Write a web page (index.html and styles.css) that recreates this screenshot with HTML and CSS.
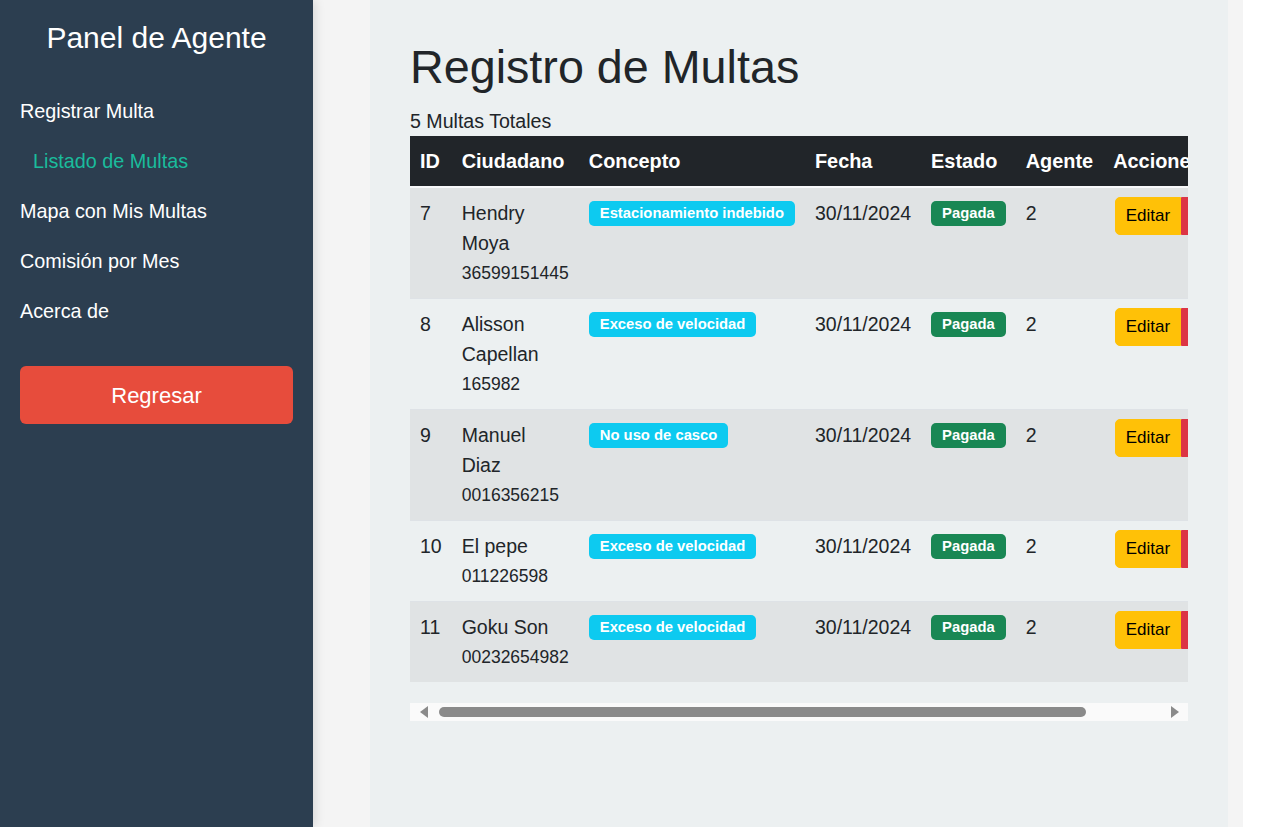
FILE: index.html
```html
<!DOCTYPE html>
<html lang="es">
<head>
<meta charset="utf-8">
<title>Registro de Multas</title>
<link rel="stylesheet" href="styles.css">
</head>
<body>
<div class="layout">
  <aside class="sidebar">
    <h2 class="sidebar-title">Panel de Agente</h2>
    <ul class="nav">
      <li><a href="#" class="nav-link">Registrar Multa</a></li>
      <li><a href="#" class="nav-link active">Listado de Multas</a></li>
      <li><a href="#" class="nav-link">Mapa con Mis Multas</a></li>
      <li><a href="#" class="nav-link">Comisión por Mes</a></li>
      <li><a href="#" class="nav-link">Acerca de</a></li>
    </ul>
    <button class="btn-back">Regresar</button>
  </aside>
  <main class="main">
    <div class="content">
      <h1 class="page-title">Registro de Multas</h1>
      <p class="total">5 Multas Totales</p>
      <div class="table-wrap">
        <table class="table">
          <thead>
            <tr>
              <th>ID</th>
              <th>Ciudadano</th>
              <th>Concepto</th>
              <th>Fecha</th>
              <th>Estado</th>
              <th>Agente</th>
              <th>Acciones</th>
            </tr>
          </thead>
          <tbody>
            <tr>
              <td>7</td>
              <td><div class="cit-name">Hendry Moya</div><div class="cit-doc">36599151445</div></td>
              <td><span class="badge badge-info">Estacionamiento indebido</span></td>
              <td>30/11/2024</td>
              <td><span class="badge badge-success">Pagada</span></td>
              <td>2</td>
              <td><div class="btn-group"><button class="btn btn-warning">Editar</button><button class="btn btn-danger">Eliminar</button></div></td>
            </tr>
            <tr>
              <td>8</td>
              <td><div class="cit-name">Alisson Capellan</div><div class="cit-doc">165982</div></td>
              <td><span class="badge badge-info">Exceso de velocidad</span></td>
              <td>30/11/2024</td>
              <td><span class="badge badge-success">Pagada</span></td>
              <td>2</td>
              <td><div class="btn-group"><button class="btn btn-warning">Editar</button><button class="btn btn-danger">Eliminar</button></div></td>
            </tr>
            <tr>
              <td>9</td>
              <td><div class="cit-name">Manuel Diaz</div><div class="cit-doc">0016356215</div></td>
              <td><span class="badge badge-info">No uso de casco</span></td>
              <td>30/11/2024</td>
              <td><span class="badge badge-success">Pagada</span></td>
              <td>2</td>
              <td><div class="btn-group"><button class="btn btn-warning">Editar</button><button class="btn btn-danger">Eliminar</button></div></td>
            </tr>
            <tr>
              <td>10</td>
              <td><div class="cit-name">El pepe</div><div class="cit-doc">011226598</div></td>
              <td><span class="badge badge-info">Exceso de velocidad</span></td>
              <td>30/11/2024</td>
              <td><span class="badge badge-success">Pagada</span></td>
              <td>2</td>
              <td><div class="btn-group"><button class="btn btn-warning">Editar</button><button class="btn btn-danger">Eliminar</button></div></td>
            </tr>
            <tr>
              <td>11</td>
              <td><div class="cit-name">Goku Son</div><div class="cit-doc">00232654982</div></td>
              <td><span class="badge badge-info">Exceso de velocidad</span></td>
              <td>30/11/2024</td>
              <td><span class="badge badge-success">Pagada</span></td>
              <td>2</td>
              <td><div class="btn-group"><button class="btn btn-warning">Editar</button><button class="btn btn-danger">Eliminar</button></div></td>
            </tr>
          </tbody>
        </table>
      </div>
      <div class="hscroll" aria-hidden="true">
        <span class="hscroll-arrow hscroll-left"></span>
        <div class="hscroll-track"><div class="hscroll-thumb" style="width: 88.9%"></div></div>
        <span class="hscroll-arrow hscroll-right"></span>
      </div>
    </div>
  </main>
</div>
</body>
</html>
```
FILE: styles.css
```css
* { box-sizing: border-box; }

html, body {
  margin: 0;
  padding: 0;
  background: #ffffff;
  font-family: "Liberation Sans", Arial, sans-serif;
  color: #212529;
}

.layout {
  display: flex;
  min-height: 100vh;
}

/* Sidebar */
.sidebar {
  flex: none;
  width: 313px;
  min-height: 100vh;
  background: #2c3e50;
  padding: 20px;
  position: relative;
  z-index: 2;
  box-shadow: 2px 0 10px rgba(0, 0, 0, 0.12);
}

.sidebar-title {
  margin: 0;
  font-size: 30px;
  line-height: 36px;
  font-weight: 400;
  color: #ffffff;
  text-align: center;
}

.nav {
  list-style: none;
  margin: 30px 0 0;
  padding: 0;
}

.nav-link {
  display: block;
  padding: 10px 0;
  font-size: 19.8px;
  line-height: 30px;
  color: #ffffff;
  text-decoration: none;
}

.nav-link.active {
  color: #1abc9c;
  padding-left: 13px;
}

.btn-back {
  display: block;
  width: 100%;
  margin-top: 30px;
  padding: 15px 10px 15px;
  border: 0;
  border-radius: 6px;
  background: #e74c3c;
  color: #ffffff;
  font-family: inherit;
  font-size: 22px;
  line-height: 30px;
  height: 58px;
}

/* Main */
.main {
  flex: none;
  width: 930px;
  background: #f4f4f4;
  padding: 0 15px 0 57px;
}

.content {
  background: #ecf0f1;
  min-height: 100vh;
  padding: 39px 40px;
}

.page-title {
  margin: 0 0 11px;
  font-size: 46.7px;
  line-height: 56px;
  font-weight: 400;
}

.total {
  margin: 0;
  font-size: 19.6px;
  line-height: 30px;
}

/* Table */
.table-wrap {
  overflow-x: hidden;
}

.table {
  width: 100%;
  border-collapse: collapse;
  margin-bottom: 21px;
  vertical-align: top;
}

.table th {
  background: #212529;
  color: #ffffff;
  font-weight: 700;
  font-size: 19.9px;
  line-height: 30px;
  text-align: left;
  padding: 10px;
  white-space: nowrap;
  border-bottom: 2px solid #f8f9fa;
}

.table td {
  padding: 10px;
  font-size: 19.5px;
  line-height: 30px;
  vertical-align: top;
  border-bottom: 1px solid #dee2e6;
}

.table tbody tr:nth-child(odd) td {
  background: rgba(0, 0, 0, 0.05);
}

.table tbody tr:last-child td {
  border-bottom: 0;
}

.cit-name {
  line-height: 30px;
}

.cit-doc {
  font-size: 17.5px;
  line-height: 30px;
}

.badge {
  display: inline-block;
  padding: 5px 11px;
  font-size: 14.8px;
  line-height: 1;
  font-weight: 700;
  color: #ffffff;
  border-radius: 5px;
  white-space: nowrap;
  vertical-align: 2px;
}

.badge-info { background: #0dcaf0; }
.badge-success { background: #198754; }

.btn-group {
  display: flex;
  margin-top: -1px;
  padding-left: 2px;
}

.btn {
  font-family: inherit;
  font-size: 17px;
  line-height: 24px;
  padding: 6px 9.5px;
  border: 1px solid transparent;
  white-space: nowrap;
}

.btn-warning {
  background: #ffc107;
  border-color: #ffc107;
  color: #000000;
  border-radius: 5px 0 0 5px;
}

.btn-danger {
  background: #dc3545;
  border-color: #dc3545;
  color: #ffffff;
  border-radius: 0 5px 5px 0;
}

/* Horizontal scrollbar of the table */
.hscroll {
  display: flex;
  align-items: center;
  height: 18px;
  background: #fafafa;
}

.hscroll-arrow {
  flex: none;
  width: 25px;
  height: 18px;
  display: flex;
  align-items: center;
  justify-content: center;
}

.hscroll-arrow::before {
  content: "";
  width: 0;
  height: 0;
  border-top: 6px solid transparent;
  border-bottom: 6px solid transparent;
}

.hscroll-left::before {
  border-right: 8px solid #8a8a8a;
  margin-left: 2px;
}

.hscroll-right::before {
  border-left: 8px solid #8a8a8a;
  margin-right: 2px;
}

.hscroll-track {
  flex: 1;
  height: 18px;
  padding: 4px 0;
}

.hscroll-thumb {
  height: 10px;
  margin-left: 4px;
  background: #8a8a8a;
  border-radius: 5px;
}
```
